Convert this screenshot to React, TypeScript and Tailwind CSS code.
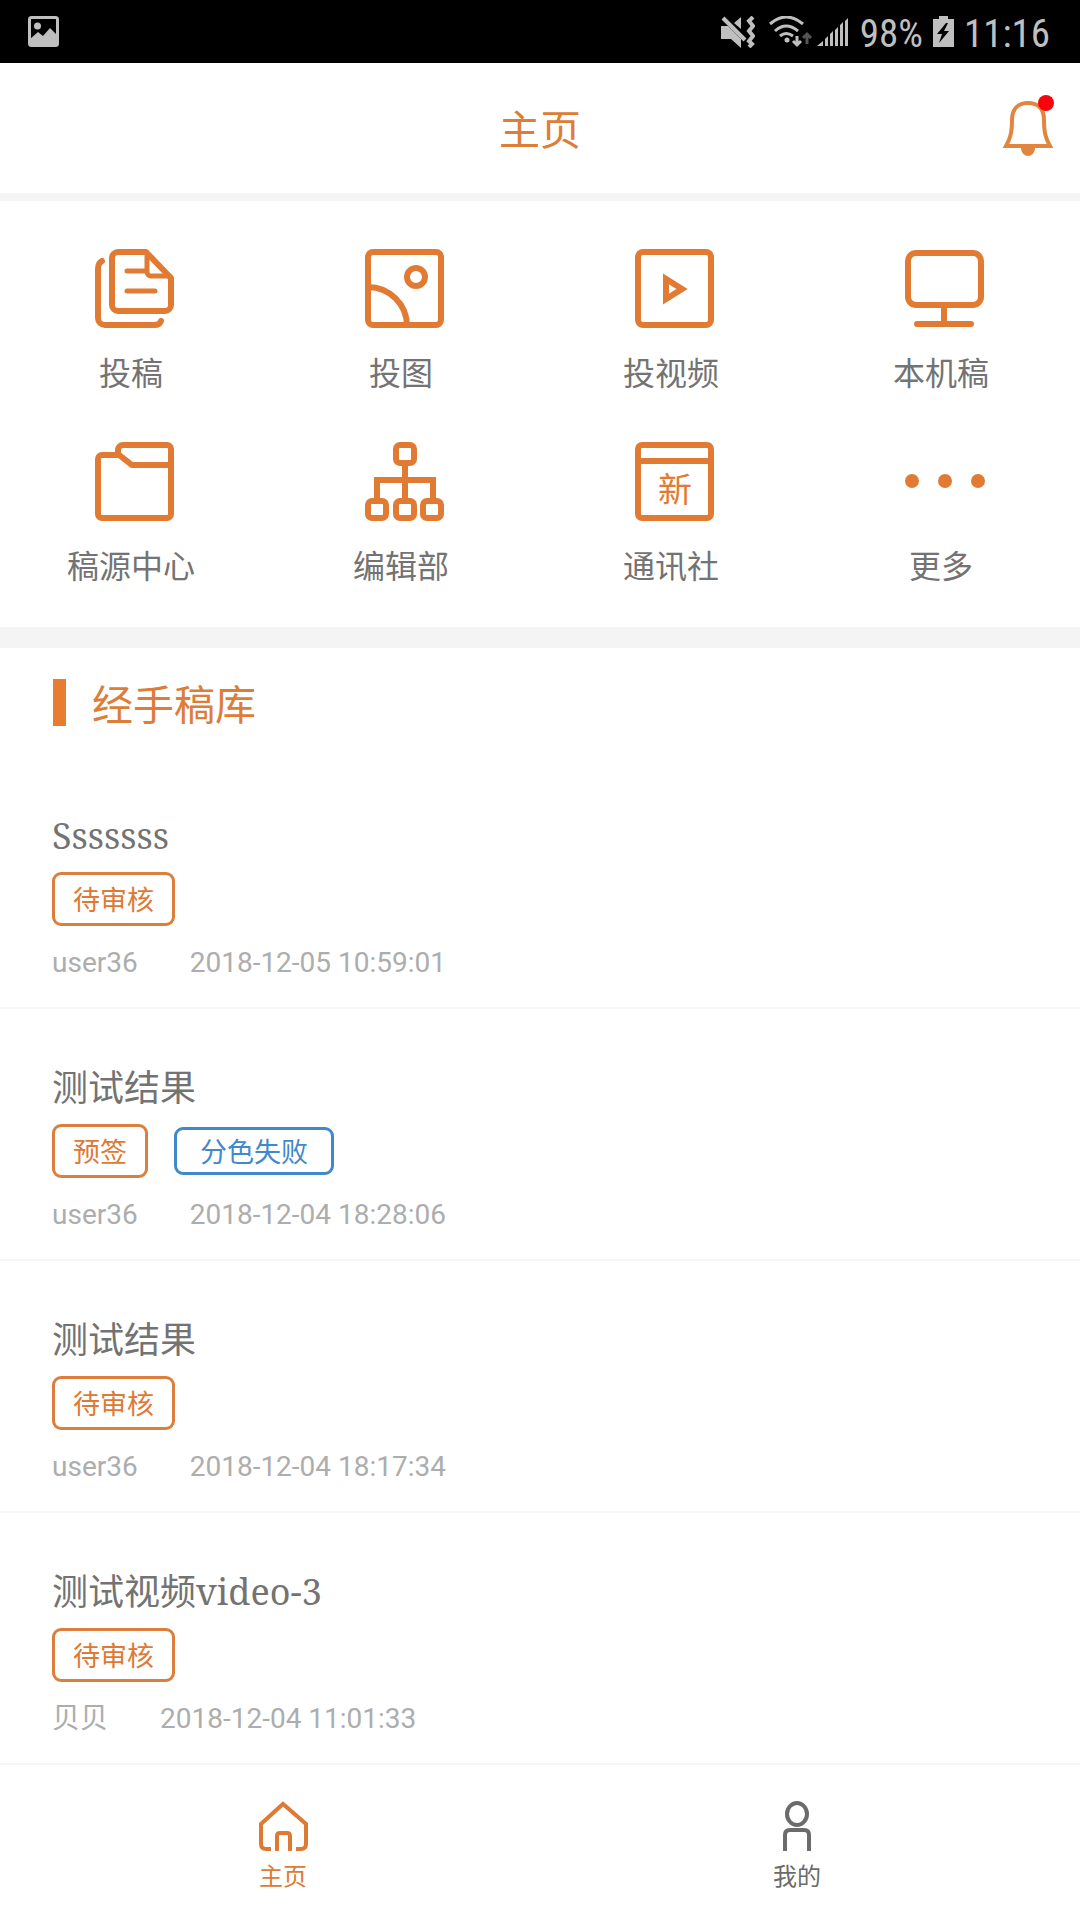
import type { ReactNode } from "react";
import clsx from "clsx";

const ORANGE = "#e17b34";

interface MenuEntry {
  label: string;
  icon: ReactNode;
}

interface Article {
  id: number;
  title: string;
  status: string;
  error?: string;
  author: string;
  time: string;
}

function MenuIcon({ children }: { children: ReactNode }) {
  return (
    <svg
      viewBox="0 0 80 80"
      className="size-20"
      fill="none"
      stroke={ORANGE}
      strokeWidth="6"
      aria-hidden="true"
    >
      {children}
    </svg>
  );
}

const menu: MenuEntry[] = [
  {
    label: "投稿",
    icon: (
      <MenuIcon>
        <path d="M51 3H23a6 6 0 0 0-6 6v47a6 6 0 0 0 6 6h47a6 6 0 0 0 6-6V29L51 3Z" strokeLinejoin="round" />
        <path d="M52 4v19a4 4 0 0 0 4 4h19" strokeWidth="5" />
        <path d="M32 22h19M32 42h28" strokeLinecap="round" strokeWidth="5" />
        <path d="M7 12Q3 14 3 20v49a7 7 0 0 0 7 7h49q6 0 7-4" strokeLinecap="round" />
      </MenuIcon>
    ),
  },
  {
    label: "投图",
    icon: (
      <MenuIcon>
        <rect x="3" y="3" width="73" height="73" rx="5" />
        <circle cx="51" cy="28" r="9" />
        <path d="M3 38a39 39 0 0 1 39 39" />
      </MenuIcon>
    ),
  },
  {
    label: "投视频",
    icon: (
      <MenuIcon>
        <rect x="3" y="3" width="73" height="73" rx="5" />
        <path d="M31 30v20l16-10Z" strokeWidth="6" />
      </MenuIcon>
    ),
  },
  {
    label: "本机稿",
    icon: (
      <MenuIcon>
        <rect x="3" y="4" width="73" height="52" rx="8" />
        <path d="M39 57v18M12 75h54" strokeLinecap="round" />
      </MenuIcon>
    ),
  },
  {
    label: "稿源中心",
    icon: (
      <MenuIcon>
        <path d="M23 13H7a4 4 0 0 0-4 4v55a4 4 0 0 0 4 4h65a4 4 0 0 0 4-4V7a4 4 0 0 0-4-4H28a5 5 0 0 0-5 5v4l14 11h39" />
      </MenuIcon>
    ),
  },
  {
    label: "编辑部",
    icon: (
      <MenuIcon>
        <rect x="31" y="3" width="18" height="18" rx="4" />
        <rect x="3" y="59" width="18" height="17" rx="4" />
        <rect x="31" y="59" width="18" height="17" rx="4" />
        <rect x="58" y="59" width="18" height="17" rx="4" />
        <path d="M40 22v36M12 58V38h56v20" />
      </MenuIcon>
    ),
  },
  {
    label: "通讯社",
    icon: (
      <MenuIcon>
        <rect x="3" y="3" width="73" height="73" rx="4" />
        <path d="M3 19h73" />
        <text x="40" y="60" textAnchor="middle" fontSize="34" fill={ORANGE} stroke="none">
          新
        </text>
      </MenuIcon>
    ),
  },
  {
    label: "更多",
    icon: (
      <MenuIcon>
        <g fill={ORANGE} stroke="none">
          <circle cx="7" cy="39" r="7" />
          <circle cx="40" cy="39" r="7" />
          <circle cx="73" cy="39" r="7" />
        </g>
      </MenuIcon>
    ),
  },
];

const articles: Article[] = [
  { id: 1, title: "Sssssss", status: "待审核", author: "user36", time: "2018-12-05 10:59:01" },
  { id: 2, title: "测试结果", status: "预签", error: "分色失败", author: "user36", time: "2018-12-04 18:28:06" },
  { id: 3, title: "测试结果", status: "待审核", author: "user36", time: "2018-12-04 18:17:34" },
  { id: 4, title: "测试视频video-3", status: "待审核", author: "贝贝", time: "2018-12-04 11:01:33" },
];

function StatusBar() {
  return (
    <div className="flex h-[63px] items-center bg-black pr-[30px] pl-7 text-[#bfbfbf]">
      <svg viewBox="0 0 31 31" className="size-[31px]" aria-hidden="true">
        <rect x="1.5" y="1.5" width="28" height="28" rx="2" fill="none" stroke="currentColor" strokeWidth="3" />
        <circle cx="9.5" cy="10" r="3.5" fill="currentColor" />
        <path d="M2 23l8-7 5 4 7-8 7 7v10H2Z" fill="currentColor" />
      </svg>

      <div className="ml-auto flex items-center">
        {/* 静音 / 振动 */}
        <svg viewBox="0 0 34 32" className="h-8 w-[34px]" fill="currentColor" aria-hidden="true">
          <path d="M0 10h7l13 13v9l-10-9H0Z" />
          <path d="M20 1v12l-7-6Z" />
          <path d="M2 2l22 22" stroke="currentColor" strokeWidth="4" />
          <path d="M32 1l-4 4 4 5-4 5 4 5-4 5 3 3-3 3" fill="none" stroke="currentColor" strokeWidth="4" />
        </svg>
        {/* Wi-Fi */}
        <svg viewBox="0 0 44 32" className="ml-3.5 h-8 w-11" fill="none" stroke="currentColor" strokeWidth="3" aria-hidden="true">
          <path d="M1 8Q17-6 34 8M6 15q11-10 23 0M11 20q6-5 13 0" />
          <circle cx="18" cy="24" r="2.5" fill="currentColor" stroke="none" />
          <path d="M28 20v9M24 25l4 4 4-4" />
          <path d="M38 28V18M34 22l4-4 4 4" stroke="#555" />
        </svg>
        {/* 信号 */}
        <svg viewBox="0 0 31 28" className="ml-1 h-7 w-[31px]" fill="currentColor" aria-hidden="true">
          <path d="M0 28l6-5v5ZM8 28v-7l3-3v10ZM13 28V16l3-3v15ZM18 28V12l3-3v19ZM23 28V7l3-3v24ZM28 28V3l3-3v28Z" />
        </svg>
        <span className="ml-3 pt-1 text-[39px] leading-[56px] font-['Roboto_Condensed','Liberation_Sans_Narrow',Roboto,sans-serif]">
          98%
        </span>
        <svg viewBox="0 0 21 31" className="ml-2.5 h-[31px] w-[21px]" aria-hidden="true">
          <path d="M6 0h9v3h6v28H0V3h6Z" fill="currentColor" />
          <path d="M13 7L4 18h5l-3 9 10-12h-5l4-8Z" fill="#000" />
        </svg>
        <span className="ml-2.5 pt-1 text-[39px] leading-[56px] font-['Roboto_Condensed','Liberation_Sans_Narrow',Roboto,sans-serif]">
          11:16
        </span>
      </div>
    </div>
  );
}

function Header() {
  return (
    <header className="relative flex h-[138px] items-center justify-center border-b-8 border-[#f4f4f4] pt-1.5">
      <h1 className="text-[41px] leading-[60px] text-[#dc7d38]">主页</h1>
      <button type="button" aria-label="消息" className="absolute top-8 right-[26px]">
        <svg viewBox="0 0 54 62" className="h-[62px] w-[54px]" aria-hidden="true">
          <path
            d="M28 8C18 8 12 14 12 25C12 38 10 44 6 51H50C46 44 44 38 44 25C44 14 38 8 28 8Z"
            fill="none"
            stroke="#e2853f"
            strokeWidth="4"
          />
          <path d="M21 53a7 8 0 0 0 14 0Z" fill="#e2853f" />
          <circle cx="46" cy="8" r="8" fill="#f8040c" />
        </svg>
      </button>
    </header>
  );
}

function ArticleItem({ article }: { article: Article }) {
  return (
    <li className="border-b-2 border-[#f5f5f5] px-[52px] pt-[52px] pb-[26px]">
      <h3 className="text-[36px] leading-[54px] text-[#737373] font-['Noto_Serif','DejaVu_Serif_Condensed','Noto_Sans_CJK_SC',serif]">
        {article.title}
      </h3>
      <div className="mt-[9px] flex items-center gap-[26px] text-[27px]">
        <span className="rounded-[9px] border-3 border-[#dd7f3c] px-[18px] pt-1 leading-[44px] text-[#dd7a33]">
          {article.status}
        </span>
        {article.error && (
          <span className="rounded-[9px] border-3 border-[#4189cb] px-[23px] pt-1 leading-[38px] text-[#4189cb]">
            {article.error}
          </span>
        )}
      </div>
      <div className="mt-[19px] flex gap-[52px] text-[28px] leading-[36px] text-[#adadad]">
        <span>{article.author}</span>
        <time>{article.time}</time>
      </div>
    </li>
  );
}

function TabBar() {
  const tabs = [
    {
      label: "主页",
      active: true,
      icon: (
        <svg viewBox="0 0 49 50" className="h-[50px] w-[49px]" fill="none" stroke="currentColor" strokeWidth="4" aria-hidden="true">
          <path d="M12 48H7q-5 0-5-5V23L24 3l23 20v20q0 5-5 5h-5" />
          <path d="M18 50V35q0-3 3-3h7q3 0 3 3v15" />
        </svg>
      ),
    },
    {
      label: "我的",
      active: false,
      icon: (
        <svg viewBox="0 0 28 50" className="h-[50px] w-7" fill="none" stroke="currentColor" strokeWidth="4" aria-hidden="true">
          <ellipse cx="14" cy="13" rx="10" ry="11" />
          <path d="M2 50V34q0-5 5-5h14q5 0 5 5v16" />
        </svg>
      ),
    },
  ];

  return (
    <nav className="mt-auto flex px-[26px] pt-9 pb-[27px]">
      {tabs.map((tab) => (
        <button
          key={tab.label}
          type="button"
          className={clsx(
            "flex flex-1 flex-col items-center gap-2",
            tab.active ? "text-[#dd7a33]" : "text-[#6b6b6b]",
          )}
        >
          {tab.icon}
          <span className="text-[24px] leading-[36px]">{tab.label}</span>
        </button>
      ))}
    </nav>
  );
}

export default function App() {
  return (
    <div className="flex min-h-screen flex-col bg-white font-[Roboto,'Noto_Sans_CJK_SC',sans-serif]">
      <StatusBar />
      <Header />

      {/* 功能入口 */}
      <section className="grid grid-cols-4 gap-y-[45px] border-b-[21px] border-[#f4f4f4] pt-12 pb-[37px]">
        {menu.map((entry) => (
          <button key={entry.label} type="button" className="flex flex-col items-center gap-[22px]">
            {entry.icon}
            <span className="pr-2 text-[32px] leading-[46px] text-[#737373]">{entry.label}</span>
          </button>
        ))}
      </section>

      {/* 稿件列表 */}
      <section>
        <div className="flex h-[109px] items-start gap-[26px] pt-[31px] pl-[53px]">
          <span className="h-[47px] w-[13px] bg-[#e87c30]" />
          <h2 className="text-[41px] leading-[54px] text-[#dc7d38]">经手稿库</h2>
        </div>
        <ul>
          {articles.map((article) => (
            <ArticleItem key={article.id} article={article} />
          ))}
        </ul>
      </section>

      <TabBar />
    </div>
  );
}
